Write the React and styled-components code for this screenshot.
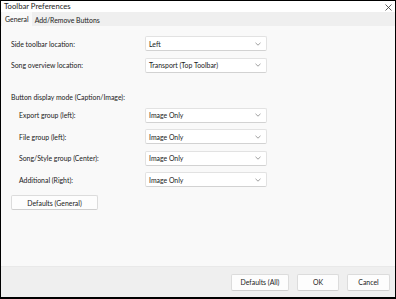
import React from "react";
import styled, { createGlobalStyle } from "styled-components";

const GlobalStyle = createGlobalStyle`
  html, body {
    margin: 0;
    padding: 0;
    background: #ffffff;
  }
  * { box-sizing: border-box; }
`;

const Window = styled.div`
  width: 396px;
  height: 299px;
  display: flex;
  flex-direction: column;
  border: 1px solid #000;
  border-bottom-width: 2px;
  font-family: Lato, "Noto Sans", sans-serif;
  font-size: 6.9px;
  color: #1a1a1a;
  background: #f9f9f9;
  overflow: hidden;
`;

const TitleBar = styled.div`
  height: 11px;
  background: #ffffff;
  display: flex;
  align-items: center;
  justify-content: space-between;
  padding: 0 3px 0 3px;
`;

const Title = styled.span`
  font-size: 7.7px;
  line-height: 11px;
  color: #222;
`;

const CloseIcon = styled.svg`
  width: 7px;
  height: 7px;
  margin-top: 1px;
`;

const TabBar = styled.div`
  height: 14px;
  background: #efefef;
  display: flex;
  align-items: flex-end;
  padding-left: 1px;
`;

const Tab = styled.div`
  height: ${p => (p.active ? "14px" : "13px")};
  padding: 0 3px;
  display: flex;
  align-items: center;
  background: ${p => (p.active ? "#f9f9f9" : "#efefef")};
  color: #222;
`;

const Content = styled.div`
  flex: 1;
  display: flex;
  flex-direction: column;
  padding: 10px 0 0 10px;
`;

const Row = styled.div`
  display: flex;
  align-items: center;
  height: 15px;
  margin-bottom: ${p => p.gap || 6.5}px;
`;

const Label = styled.div`
  width: ${p => (p.indent ? 126 : 134)}px;
  margin-left: ${p => (p.indent ? 8 : 0)}px;
`;

const Section = styled.div`
  height: 15px;
  display: flex;
  align-items: center;
  margin-bottom: 3px;
`;

const Select = styled.div`
  width: 122px;
  height: 15px;
  background: #fff;
  border: 1px solid #e2e2e2;
  border-bottom-color: #d2d2d2;
  border-radius: 2px;
  display: flex;
  align-items: center;
  justify-content: space-between;
  padding: 0 5px 0 3px;
`;

const Chevron = styled.svg`
  width: 6px;
  height: 4px;
`;

const Button = styled.div`
  width: ${p => p.w}px;
  height: ${p => p.h || 15}px;
  background: #fdfdfd;
  border: 1px solid #dcdcdc;
  border-bottom-color: #cfcfcf;
  border-radius: 2px;
  display: flex;
  align-items: center;
  justify-content: center;
`;

const Footer = styled.div`
  height: 31px;
  background: #efefef;
  border-top: 1px solid #e9e9e9;
  display: flex;
  align-items: center;
  justify-content: flex-end;
  gap: 8px;
  padding: 0 5px 0 0;
`;

function Dropdown({ value }) {
  return (
    <Select>
      <span>{value}</span>
      <Chevron viewBox="0 0 6 4">
        <path d="M0.5 0.8 L3 3.2 L5.5 0.8" fill="none" stroke="#777" strokeWidth="0.7" />
      </Chevron>
    </Select>
  );
}

export default function App() {
  return (
    <>
      <GlobalStyle />
      <Window>
        <TitleBar>
          <Title>Toolbar Preferences</Title>
          <CloseIcon viewBox="0 0 7 7">
            <path d="M0.5 0.5 L6.5 6.5 M6.5 0.5 L0.5 6.5" stroke="#333" strokeWidth="0.8" />
          </CloseIcon>
        </TitleBar>
        <TabBar>
          <Tab active>General</Tab>
          <Tab>Add/Remove Buttons</Tab>
        </TabBar>
        <Content>
          <Row>
            <Label>Side toolbar location:</Label>
            <Dropdown value="Left" />
          </Row>
          <Row gap={17}>
            <Label>Song overview location:</Label>
            <Dropdown value="Transport (Top Toolbar)" />
          </Row>
          <Section>Button display mode (Caption/Image):</Section>
          <Row>
            <Label indent>Export group (left):</Label>
            <Dropdown value="Image Only" />
          </Row>
          <Row>
            <Label indent>File group (left):</Label>
            <Dropdown value="Image Only" />
          </Row>
          <Row>
            <Label indent>Song/Style group (Center):</Label>
            <Dropdown value="Image Only" />
          </Row>
          <Row gap={8}>
            <Label indent>Additional (Right):</Label>
            <Dropdown value="Image Only" />
          </Row>
          <Button w={87}>Defaults (General)</Button>
        </Content>
        <Footer>
          <Button w={58} h={17}>Defaults (All)</Button>
          <Button w={42} h={17}>OK</Button>
          <Button w={43} h={17}>Cancel</Button>
        </Footer>
      </Window>
    </>
  );
}
